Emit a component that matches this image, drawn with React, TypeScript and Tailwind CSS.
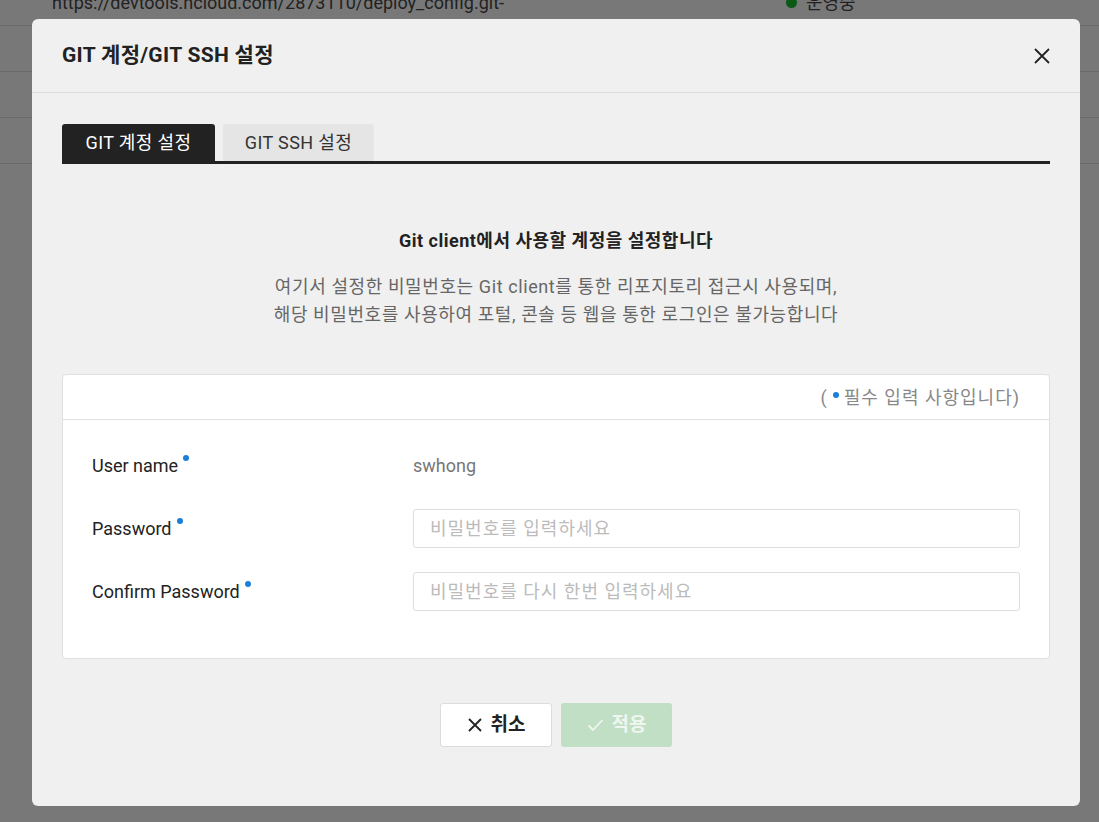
import React from 'react';

const font = "font-['Roboto','Noto_Sans_CJK_KR',sans-serif]";

const rows = [
  { url: 'https://devtools.ncloud.com/2873110/deploy_config.git-', status: '운영중' },
  { url: '', status: '' },
  { url: '', status: '' },
  { url: '', status: '' },
];

const Dot = () => <span className="ml-[5px] inline-block h-[6px] w-[6px] -translate-y-[8px] rounded-full bg-[#1a7fd8]" />;

const Field = ({ label, children }: { label: string; children: React.ReactNode }) => (
  <div className="flex h-[39px] items-center">
    <div className="flex w-[321px] items-center text-[18px] text-[#222]">
      {label}
      <Dot />
    </div>
    <div className="flex-1">{children}</div>
  </div>
);

const Input = ({ placeholder }: { placeholder: string }) => (
  <input
    type="password"
    placeholder={placeholder}
    className="h-[39px] w-full rounded-[3px] border border-[#dedede] bg-white px-4 text-[18px] tracking-[1px] text-[#222] outline-none placeholder:text-[#bbbbbb]"
  />
);

export default function App() {
  return (
    <div className={`relative h-[822px] w-[1099px] overflow-hidden bg-[#f0f0f0] ${font}`}>
      {/* page behind the modal */}
      <div className="-mt-[20px]">
        {rows.map((r, i) => (
          <div key={i} className="flex h-[46px] items-center border-b border-[#d4d4d4] pl-[52px] text-[18px] text-[#444]">
            <span className="w-[734px]">{r.url}</span>
            {r.status && (
              <span className="flex items-center gap-[9px]">
                <span className="h-[11px] w-[11px] rounded-full bg-[#17b22a]" />
                {r.status}
              </span>
            )}
          </div>
        ))}
      </div>

      {/* overlay */}
      <div className="absolute inset-0 bg-black/50">
        <div className="absolute left-[32px] top-[19px] flex h-[787px] w-[1048px] flex-col rounded-[6px] bg-[#f0f0f0]">
          <div className="flex h-[74px] items-center justify-between border-b border-[#dcdcdc] px-[30px]">
            <h2 className="text-[21px] font-bold tracking-[0.3px] text-[#222]">GIT 계정/GIT SSH 설정</h2>
            <svg width="18" height="18" viewBox="0 0 18 18" className="-mr-[1px]">
              <path d="M2 2L16 16M16 2L2 16" stroke="#222" strokeWidth="1.8" />
            </svg>
          </div>

          <div className="flex flex-1 flex-col px-[30px] pt-[31px]">
            <div className="flex border-b-[3px] border-[#222]">
              <div className="flex h-[37px] w-[153px] items-center justify-center rounded-t-[3px] bg-[#222] text-[18px] tracking-[0.4px] text-white">
                GIT 계정 설정
              </div>
              <div className="ml-[8px] flex h-[37px] w-[151px] items-center justify-center rounded-t-[3px] bg-[#e5e5e5] text-[18px] tracking-[0.4px] text-[#333]">
                GIT SSH 설정
              </div>
            </div>

            <div className="mt-[63px] text-center">
              <p className="text-[18px] font-bold tracking-[0.5px] text-[#222]">Git client에서 사용할 계정을 설정합니다</p>
              <p className="mt-[19px] text-[18px] leading-[28px] tracking-[0.6px] text-[#666]">
                여기서 설정한 비밀번호는 Git client를 통한 리포지토리 접근시 사용되며,
                <br />
                해당 비밀번호를 사용하여 포털, 콘솔 등 웹을 통한 로그인은 불가능합니다
              </p>
            </div>

            <div className="mt-[45px] rounded-[4px] border border-[#e0e0e0] bg-white">
              <div className="flex h-[45px] items-center justify-end border-b border-[#e0e0e0] pr-[29px] text-[18px] tracking-[1px] text-[#888]">
                (<span className="mx-[5px] inline-block h-[6px] w-[6px] -translate-y-[2px] rounded-full bg-[#1a7fd8]" />
                필수 입력 사항입니다)
              </div>
              <div className="flex flex-col gap-[24px] px-[29px] pb-[47px] pt-[26px]">
                <Field label="User name">
                  <span className="text-[18px] text-[#777]">swhong</span>
                </Field>
                <Field label="Password">
                  <Input placeholder="비밀번호를 입력하세요" />
                </Field>
                <Field label="Confirm Password">
                  <Input placeholder="비밀번호를 다시 한번 입력하세요" />
                </Field>
              </div>
            </div>

            <div className="mt-[44px] flex justify-center gap-[9px]">
              <button className="flex h-[44px] w-[112px] items-center justify-center gap-[8px] rounded-[3px] border border-[#dcdcdc] bg-white text-[19px] font-bold text-[#222]">
                <svg width="16" height="16" viewBox="0 0 16 16">
                  <path d="M2 2L14 14M14 2L2 14" stroke="#222" strokeWidth="1.8" />
                </svg>
                취소
              </button>
              <button className="flex h-[44px] w-[111px] items-center justify-center gap-[8px] rounded-[3px] bg-[#c1dfc5] text-[19px] font-bold text-[#eef6ef]">
                <svg width="17" height="14" viewBox="0 0 17 14">
                  <path d="M1.5 7.5L6 12L15.5 2" stroke="#eef6ef" strokeWidth="1.8" fill="none" />
                </svg>
                적용
              </button>
            </div>
          </div>
        </div>
      </div>
    </div>
  );
}
